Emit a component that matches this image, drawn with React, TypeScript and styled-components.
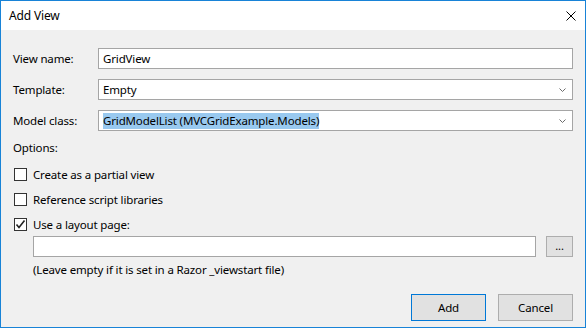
import React from "react";
import styled, { createGlobalStyle } from "styled-components";

const GlobalStyle = createGlobalStyle`
  html, body {
    margin: 0;
    padding: 0;
    background: #ffffff;
  }
  body {
    font-family: "Noto Sans", "Open Sans", sans-serif;
    font-size: 11.5px;
    letter-spacing: -0.15px;
    color: #000000;
  }
`;

const Window = styled.div`
  width: 586px;
  height: 328px;
  box-sizing: border-box;
  border: 1px solid #1883d7;
  display: flex;
  flex-direction: column;
  background: #f0f0f0;
`;

const TitleBar = styled.div`
  height: 29px;
  background: #ffffff;
  display: flex;
  align-items: center;
  justify-content: space-between;
  padding: 0 9px 0 8px;
  font-size: 12px;
`;

const CloseButton = styled.div`
  width: 10px;
  height: 10px;
  display: flex;
  margin-top: 1px;
`;

const Body = styled.div`
  flex: 1;
  display: flex;
  flex-direction: column;
  padding: 18px 12px 6px 12px;
`;

const FormGrid = styled.div`
  display: grid;
  grid-template-columns: 85px 1fr;
  row-gap: 10px;
  align-items: center;
`;

const Label = styled.div`
  line-height: 16px;
`;

const TextBox = styled.div`
  height: 21px;
  box-sizing: border-box;
  border: 1px solid #a5a5a5;
  background: #ffffff;
  display: flex;
  align-items: center;
  padding: 0 4px;
  white-space: nowrap;
`;

const Combo = styled(TextBox)`
  justify-content: space-between;
  padding-right: 6px;
`;

const Selected = styled.span<{ $selected?: boolean }>`
  background: ${({ $selected }) => ($selected ? "#99c9ef" : "transparent")};
  line-height: 16px;
`;

const SectionLabel = styled.div`
  margin-top: 9px;
  line-height: 16px;
`;

const CheckList = styled.div`
  margin-top: 12px;
  display: flex;
  flex-direction: column;
  gap: 12px;
`;

const CheckRow = styled.div`
  height: 13px;
  display: flex;
  align-items: center;
  gap: 6px;
  padding-left: 1px;
  line-height: 13px;
`;

const Box = styled.div`
  width: 13px;
  height: 13px;
  box-sizing: border-box;
  border: 1px solid #333333;
  background: #ffffff;
  display: flex;
  align-items: center;
  justify-content: center;
`;

const LayoutRow = styled.div`
  margin: 5px 0 0 20px;
  display: flex;
  gap: 10px;
`;

const PathBox = styled(TextBox)`
  flex: 1;
`;

const SmallButton = styled.div`
  width: 27px;
  height: 21px;
  box-sizing: border-box;
  border: 1px solid #adadad;
  background: #e1e1e1;
  display: flex;
  align-items: flex-end;
  justify-content: center;
  padding-bottom: 5px;
  font-size: 11px;
  line-height: 11px;
`;

const Hint = styled.div`
  margin: 5px 0 0 20px;
  line-height: 16px;
`;

const Footer = styled.div`
  margin-top: auto;
  display: flex;
  justify-content: flex-end;
  gap: 12px;
`;

const Button = styled.div<{ $default?: boolean }>`
  width: 75px;
  height: 27px;
  box-sizing: border-box;
  border: 1px solid ${({ $default }) => ($default ? "#0078d7" : "#adadad")};
  background: #e1e1e1;
  display: flex;
  align-items: center;
  justify-content: center;
`;

const Chevron = () => (
  <svg width="7" height="4" viewBox="0 0 7 4">
    <polyline points="0.5,0.5 3.5,3.5 6.5,0.5" fill="none" stroke="#6b6b6b" strokeWidth="1" />
  </svg>
);

const Check = () => (
  <svg width="11" height="11" viewBox="0 0 11 11">
    <polyline points="1.5,5.5 4,8.5 9.5,1.5" fill="none" stroke="#222222" strokeWidth="1.6" />
  </svg>
);

const options = [
  { label: "Create as a partial view", checked: false },
  { label: "Reference script libraries", checked: false },
  { label: "Use a layout page:", checked: true },
];

export default function App() {
  return (
    <>
      <GlobalStyle />
      <Window>
        <TitleBar>
          <span>Add View</span>
          <CloseButton>
            <svg width="10" height="10" viewBox="0 0 10 10">
              <path d="M0.5 0.5 L9.5 9.5 M9.5 0.5 L0.5 9.5" stroke="#000000" strokeWidth="1" />
            </svg>
          </CloseButton>
        </TitleBar>
        <Body>
          <FormGrid>
            <Label>View name:</Label>
            <TextBox>GridView</TextBox>
            <Label>Template:</Label>
            <Combo>
              <span>Empty</span>
              <Chevron />
            </Combo>
            <Label>Model class:</Label>
            <Combo>
              <Selected $selected>GridModelList (MVCGridExample.Models)</Selected>
              <Chevron />
            </Combo>
          </FormGrid>
          <SectionLabel>Options:</SectionLabel>
          <CheckList>
            {options.map((o) => (
              <CheckRow key={o.label}>
                <Box>{o.checked && <Check />}</Box>
                <span>{o.label}</span>
              </CheckRow>
            ))}
          </CheckList>
          <LayoutRow>
            <PathBox />
            <SmallButton>...</SmallButton>
          </LayoutRow>
          <Hint>(Leave empty if it is set in a Razor _viewstart file)</Hint>
          <Footer>
            <Button $default>Add</Button>
            <Button>Cancel</Button>
          </Footer>
        </Body>
      </Window>
    </>
  );
}
